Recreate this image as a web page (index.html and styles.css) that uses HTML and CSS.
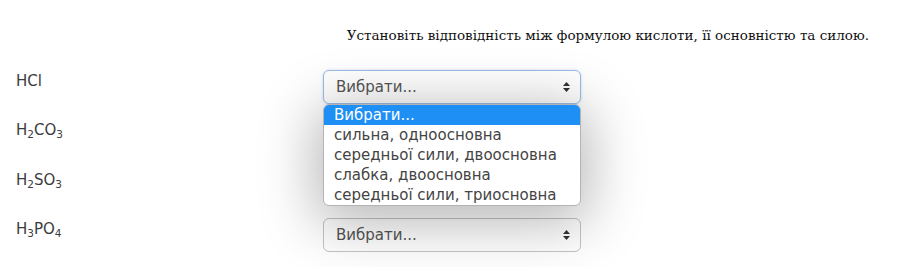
FILE: index.html
```html
<!DOCTYPE html>
<html>
<head>
    <meta charset="utf-8">
    <meta name="viewport" content="width=device-width, initial-scale=1.0">
    <link rel="stylesheet" href="styles.css">
</head>
<body>
    <div class="question">
        <div class="prompt">Установіть відповідність між формулою кислоти, її основністю та силою.</div>

        <div class="match-row">
            <div class="formula">HCl</div>
            <div class="select-wrap">
                <div class="select focused">
                    <span>Вибрати...</span>
                    <svg class="arrows" width="7" height="10" viewBox="0 0 7 10"><path d="M3.5 0 L7 4 L0 4 Z M3.5 10 L7 6 L0 6 Z" fill="#333"/></svg>
                </div>
                <div class="options">
                    <div class="option selected">Вибрати...</div>
                    <div class="option">сильна, одноосновна</div>
                    <div class="option">середньої сили, двоосновна</div>
                    <div class="option">слабка, двоосновна</div>
                    <div class="option">середньої сили, триосновна</div>
                </div>
            </div>
        </div>

        <div class="match-row">
            <div class="formula">H<sub>2</sub>CO<sub>3</sub></div>
            <div class="select-wrap">
                <div class="select">
                    <span>Вибрати...</span>
                    <svg class="arrows" width="7" height="10" viewBox="0 0 7 10"><path d="M3.5 0 L7 4 L0 4 Z M3.5 10 L7 6 L0 6 Z" fill="#333"/></svg>
                </div>
            </div>
        </div>

        <div class="match-row">
            <div class="formula">H<sub>2</sub>SO<sub>3</sub></div>
            <div class="select-wrap">
                <div class="select">
                    <span>Вибрати...</span>
                    <svg class="arrows" width="7" height="10" viewBox="0 0 7 10"><path d="M3.5 0 L7 4 L0 4 Z M3.5 10 L7 6 L0 6 Z" fill="#333"/></svg>
                </div>
            </div>
        </div>

        <div class="match-row">
            <div class="formula">H<sub>3</sub>PO<sub>4</sub></div>
            <div class="select-wrap">
                <div class="select">
                    <span>Вибрати...</span>
                    <svg class="arrows" width="7" height="10" viewBox="0 0 7 10"><path d="M3.5 0 L7 4 L0 4 Z M3.5 10 L7 6 L0 6 Z" fill="#333"/></svg>
                </div>
            </div>
        </div>
    </div>
</body>
</html>
```

FILE: styles.css
```css
body {
    margin: 0;
    background: #fff;
    font-family: 'DejaVu Sans', 'Noto Sans', sans-serif;
    color: #3a3a3a;
}

.question {
    padding: 0 16px;
}

.prompt {
    display: flex;
    justify-content: flex-end;
    padding: 26px 12px 0 0;
    height: 70px;
    box-sizing: border-box;
    font-family: 'DejaVu Serif', 'Liberation Serif', serif;
    font-size: 13.5px;
    line-height: 18px;
    color: #111;
}

.match-row {
    display: flex;
    align-items: flex-start;
    height: 49.3px;
}

.formula {
    width: 307px;
    font-size: 15px;
    line-height: 21px;
    padding-top: 1px;
    color: #3c3c3c;
}

.formula sub {
    font-size: 10.5px;
    vertical-align: -3px;
    line-height: 0;
}

.select-wrap {
    position: relative;
}

.select {
    width: 258px;
    height: 34px;
    box-sizing: border-box;
    border: 1px solid #c4c4c4;
    border-radius: 6px;
    padding: 0 10px 0 12px;
    display: flex;
    align-items: center;
    justify-content: space-between;
    font-size: 15px;
    color: #555;
    background: #fff;
}

.select.focused {
    border-color: #9dbbe6;
    box-shadow: 0 0 3px rgba(120, 160, 220, 0.35);
}

.options {
    position: absolute;
    top: 34px;
    left: 0;
    width: 258px;
    box-sizing: border-box;
    border: 1px solid #b4b4b4;
    border-radius: 6px;
    background: #fff;
    overflow: hidden;
    z-index: 2;
    box-shadow: 0 10px 55px 8px rgba(0, 0, 0, 0.28);
}

.option {
    font-size: 15px;
    line-height: 20px;
    padding-left: 10px;
    color: #444;
    white-space: nowrap;
}

.option.selected {
    background: #1e8ff5;
    color: #fff;
}
```
